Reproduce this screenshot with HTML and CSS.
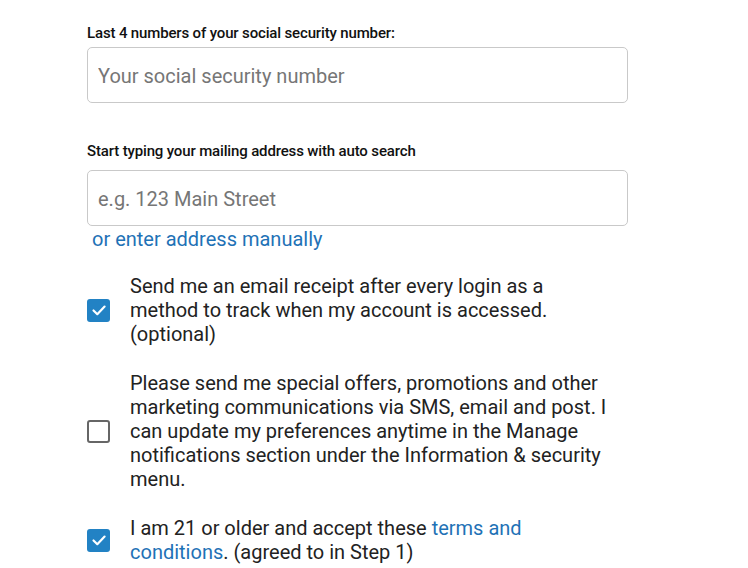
FILE: index.html
```html
<!DOCTYPE html>
<html lang="en">
<head>
<meta charset="utf-8">
<title>Registration</title>
<link rel="stylesheet" href="styles.css">
</head>
<body>
<main class="form">
  <label class="field-label label-ssn" for="ssn">Last 4 numbers of your social security number:</label>
  <input class="text-input" id="ssn" type="text" placeholder="Your social security number">

  <label class="field-label label-addr" for="addr">Start typing your mailing address with auto search</label>
  <input class="text-input" id="addr" type="text" placeholder="e.g. 123 Main Street">
  <a class="manual-link" href="#">or enter address manually</a>

  <div class="check-row row-1">
    <span class="box checked"><svg viewBox="0 0 22 22" width="22" height="22"><path d="M5.5 11.5 L9.3 15.2 L16.6 7.6" fill="none" stroke="#fff" stroke-width="2.2" stroke-linecap="round" stroke-linejoin="round"/></svg></span>
    <p class="check-text">Send me an email receipt after every login as a method to track when my account is accessed. (optional)</p>
  </div>

  <div class="check-row row-2">
    <span class="box"></span>
    <p class="check-text">Please send me special offers, promotions and other marketing communications via SMS, email and post. I can update my preferences anytime in the Manage notifications section under the Information &amp; security menu.</p>
  </div>

  <div class="check-row row-3">
    <span class="box checked"><svg viewBox="0 0 22 22" width="22" height="22"><path d="M5.5 11.5 L9.3 15.2 L16.6 7.6" fill="none" stroke="#fff" stroke-width="2.2" stroke-linecap="round" stroke-linejoin="round"/></svg></span>
    <p class="check-text">I am 21 or older and accept these <a class="inline-link" href="#">terms and conditions</a>. (agreed to in Step 1)</p>
  </div>
</main>
</body>
</html>
```

FILE: styles.css
```css
html, body {
  margin: 0;
  padding: 0;
  background: #ffffff;
}

body {
  font-family: Roboto, "Liberation Sans", sans-serif;
  color: #222222;
  width: 748px;
  height: 568px;
  overflow: hidden;
}

.form {
  display: flex;
  flex-direction: column;
  align-items: flex-start;
  padding: 24px 0 0 87px;
  width: 541px;
}

.field-label {
  font-size: 15px;
  line-height: 18px;
  font-weight: 500;
  color: #111111;
  letter-spacing: -0.15px;
}

.label-ssn {
  margin-bottom: 5px;
}

.label-addr {
  margin-top: 39px;
  margin-bottom: 10px;
}

.text-input {
  box-sizing: border-box;
  width: 541px;
  height: 56px;
  border: 1px solid #c9c9c9;
  border-radius: 5px;
  padding: 2px 10px 0;
  font-family: Roboto, "Liberation Sans", sans-serif;
  font-size: 20px;
  color: #222222;
  background: #ffffff;
  outline: none;
}

.text-input::placeholder {
  color: #767676;
  opacity: 1;
}

.manual-link {
  margin-left: 5px;
  padding-top: 1px;
  font-size: 20px;
  line-height: 24px;
  color: #1f72b6;
  text-decoration: none;
}

.check-row {
  display: flex;
  align-items: center;
  gap: 20px;
}

.row-1 {
  margin-top: 23px;
}

.row-2,
.row-3 {
  margin-top: 25px;
}

.box {
  box-sizing: border-box;
  flex: none;
  width: 23px;
  height: 23px;
  border: 2px solid #666666;
  border-radius: 3px;
  background: #ffffff;
  display: flex;
  align-items: center;
  justify-content: center;
}

.box.checked {
  border: none;
  background: #2282c4;
}

.check-text {
  margin: 0;
  width: 480px;
  font-size: 20px;
  line-height: 24px;
  color: #222222;
}

.inline-link {
  color: #1f72b6;
  text-decoration: none;
}
```
